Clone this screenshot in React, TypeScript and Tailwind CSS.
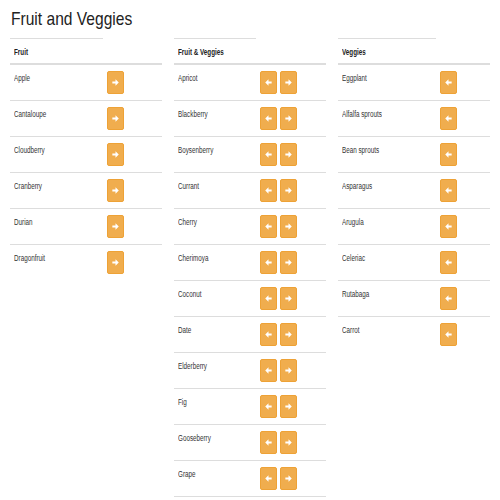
import React from 'react';

type Mode = 'right' | 'both' | 'left';

const Arrow = ({ dir }: { dir: 'left' | 'right' }) => (
  <svg width="7" height="7" viewBox="0 0 6 6" className={dir === 'left' ? 'rotate-180' : ''}>
    <path d="M0.3 2.1 H3 V0.3 L5.8 3 L3 5.7 V3.9 H0.3 Z" fill="#fff" />
  </svg>
);

const Btn = ({ dir }: { dir: 'left' | 'right' }) => (
  <div className="w-[17px] h-[23px] bg-[#f0ad4e] border border-[#eea236] rounded-[2px] flex items-center justify-center">
    <Arrow dir={dir} />
  </div>
);

const Column = ({
  title,
  items,
  cellW,
  mode,
  closed = false,
}: {
  title: string;
  items: string[];
  cellW: string;
  mode: Mode;
  closed?: boolean;
}) => (
  <div className="flex flex-col">
    {/* header */}
    <div className="h-[26px] border-b border-[#ddd]">
      <div className={`${cellW} h-full border-t border-[#ddd] pl-[4px] pt-[8px] text-[8.5px] leading-[10px]`}>
        <span className="block origin-left scale-x-[0.74] font-bold text-[#222] whitespace-nowrap">
          {title}
        </span>
      </div>
    </div>
    {items.map((item, i) => (
      <div
        key={item}
        className={
          closed && i === items.length - 1
            ? 'flex h-[37px] border-t border-b border-[#ddd]'
            : 'flex h-[36px] border-t border-[#ddd]'
        }
      >
        <div className={`${cellW} pl-[4px] pt-[8px] text-[8.5px] leading-[10px]`}>
          <span className="block origin-left scale-x-[0.74] text-[#333] whitespace-nowrap">
            {item}
          </span>
        </div>
        <div className="flex gap-[3px] pl-[4px] pt-[6px]">
          {mode !== 'right' && <Btn dir="left" />}
          {mode !== 'left' && <Btn dir="right" />}
        </div>
      </div>
    ))}
  </div>
);

const fruit = ['Apple', 'Cantaloupe', 'Cloudberry', 'Cranberry', 'Durian', 'Dragonfruit'];
const both = [
  'Apricot',
  'Blackberry',
  'Boysenberry',
  'Currant',
  'Cherry',
  'Cherimoya',
  'Coconut',
  'Date',
  'Elderberry',
  'Fig',
  'Gooseberry',
  'Grape',
];
const veggies = [
  'Eggplant',
  'Alfalfa sprouts',
  'Bean sprouts',
  'Asparagus',
  'Arugula',
  'Celeriac',
  'Rutabaga',
  'Carrot',
];

export default function App() {
  return (
    <div className="w-[500px] h-[500px] overflow-hidden bg-white px-[10px] pt-[8px] font-['Liberation_Sans',Arial,sans-serif]">
      <h1 className="h-[22px] mb-[8px] pl-[1px] text-[19px] leading-[22px]">
        <span className="block origin-left scale-x-[0.82] text-[#222] whitespace-nowrap">
          Fruit and Veggies
        </span>
      </h1>
      <div className="grid grid-cols-3 gap-[12px]">
        <Column title="Fruit" items={fruit} cellW="w-[93px]" mode="right" />
        <Column title="Fruit & Veggies" items={both} cellW="w-[82px]" mode="both" closed />
        <Column title="Veggies" items={veggies} cellW="w-[98px]" mode="left" />
      </div>
    </div>
  );
}
